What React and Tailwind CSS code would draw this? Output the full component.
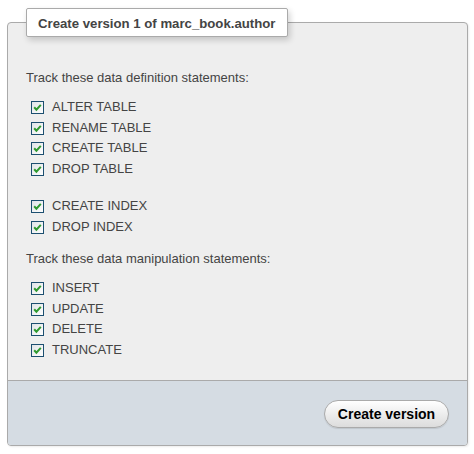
import React from "react";

function Check() {
  return (
    <svg width="13" height="13" viewBox="0 0 13 13" className="shrink-0">
      <defs>
        <linearGradient id="cbg" x1="0" y1="0" x2="1" y2="1">
          <stop offset="0" stopColor="#dfe3e6" />
          <stop offset="1" stopColor="#ffffff" />
        </linearGradient>
      </defs>
      <rect x="0.5" y="0.5" width="12" height="12" fill="url(#cbg)" stroke="#1c4f70" />
      <path d="M3.2 6.3 L5.4 8.7 L9.8 3.9" fill="none" stroke="#2f9a2f" strokeWidth="2" />
    </svg>
  );
}

function Row({ label }) {
  return (
    <div className="flex items-center h-[20.7px] pl-[5px] gap-[8px]">
      <Check />
      <span>{label}</span>
    </div>
  );
}

export default function App() {
  return (
    <div
      className="relative w-[474px] h-[454px] bg-white text-[#444] text-[13px]"
      style={{ fontFamily: '"Liberation Sans", Arial, sans-serif' }}
    >
      <div className="absolute left-[7px] top-[22px] w-[461px] h-[424px] border border-[#aaa] rounded-[4px] bg-[#eeeeee] flex flex-col overflow-hidden shadow-[1px_1px_2px_rgba(0,0,0,0.08)]">
        <div className="flex-1 pl-[18px] pt-[44.8px] leading-[20.7px]">
          <div>Track these data definition statements:</div>
          <div className="mt-[8.6px]">
            <Row label="ALTER TABLE" />
            <Row label="RENAME TABLE" />
            <Row label="CREATE TABLE" />
            <Row label="DROP TABLE" />
          </div>
          <div className="mt-[16.2px]">
            <Row label="CREATE INDEX" />
            <Row label="DROP INDEX" />
          </div>
          <div className="mt-[11.6px]">Track these data manipulation statements:</div>
          <div className="mt-[8.3px]">
            <Row label="INSERT" />
            <Row label="UPDATE" />
            <Row label="DELETE" />
            <Row label="TRUNCATE" />
          </div>
        </div>
        <div className="h-[65px] border-t border-[#aaa] bg-[#d5dce3] flex justify-end items-start pt-[19px] pr-[18px]">
          <button className="h-[28px] w-[125px] rounded-full border border-[#aaa] bg-gradient-to-b from-white to-[#dcdcdc] text-black font-bold text-[14px] shadow-[0_1px_1px_rgba(0,0,0,0.1)]">
            Create version
          </button>
        </div>
      </div>
      <div className="absolute left-[26px] top-[8px] w-[262px] h-[29px] border border-[#aaa] bg-white rounded-[2px] shadow-[2px_3px_6px_rgba(0,0,0,0.18)] flex items-center pl-[11px] pt-[2px] font-bold text-[13.2px] text-[#444] whitespace-nowrap">
        Create version 1 of marc_book.author
      </div>
    </div>
  );
}
